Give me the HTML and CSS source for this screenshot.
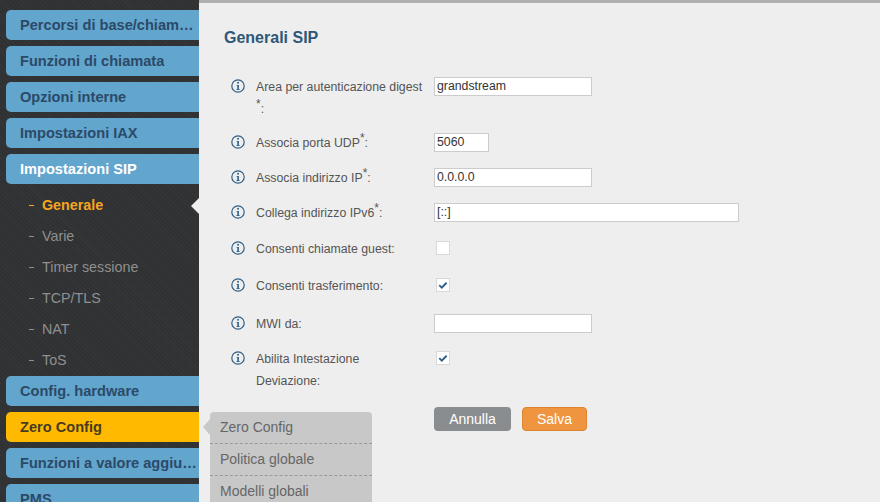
FILE: index.html
```html
<!DOCTYPE html>
<html lang="it">
<head>
    <meta charset="UTF-8">
    <meta name="viewport" content="width=device-width, initial-scale=1.0">
    <title>Generali SIP</title>
    <link rel="stylesheet" href="styles.css">
</head>
<body>
    <svg class="defs" width="0" height="0">
        <symbol id="info" viewBox="0 0 14 14">
            <circle cx="7" cy="7" r="6.2" fill="none" stroke="#2f5f86" stroke-width="1.2"/>
            <rect x="6.2" y="2.9" width="1.7" height="1.7" fill="#2f5f86"/>
            <path d="M5.6 5.9h2.3v4.3h.8v.9H5.4v-.9h.9V6.8h-.7z" fill="#2f5f86"/>
        </symbol>
    </svg>

    <nav class="sidebar">
        <a class="menu-item">Percorsi di base/chiamate in uscita</a>
        <a class="menu-item">Funzioni di chiamata</a>
        <a class="menu-item">Opzioni interne</a>
        <a class="menu-item">Impostazioni IAX</a>
        <a class="menu-item open">Impostazioni SIP</a>
        <ul class="submenu">
            <li class="current">Generale</li>
            <li>Varie</li>
            <li>Timer sessione</li>
            <li>TCP/TLS</li>
            <li>NAT</li>
            <li>ToS</li>
        </ul>
        <a class="menu-item">Config. hardware</a>
        <a class="menu-item hover">Zero Config</a>
        <a class="menu-item">Funzioni a valore aggiunto</a>
        <a class="menu-item">PMS</a>
    </nav>

    <main class="content">
        <h1 class="title">Generali SIP</h1>
        <form class="form">
            <svg class="info"><use href="#info"/></svg>
            <label class="label">Area per autenticazione digest <sup>*</sup>:</label>
            <div><input type="text" class="input" value="grandstream"></div>

            <svg class="info"><use href="#info"/></svg>
            <label class="label">Associa porta UDP<sup>*</sup>:</label>
            <div><input type="text" class="input small" value="5060"></div>

            <svg class="info"><use href="#info"/></svg>
            <label class="label">Associa indirizzo IP<sup>*</sup>:</label>
            <div><input type="text" class="input" value="0.0.0.0"></div>

            <svg class="info"><use href="#info"/></svg>
            <label class="label">Collega indirizzo IPv6<sup>*</sup>:</label>
            <div><input type="text" class="input large" value="[::]"></div>

            <svg class="info"><use href="#info"/></svg>
            <label class="label">Consenti chiamate guest:</label>
            <div><span class="check"></span></div>

            <svg class="info"><use href="#info"/></svg>
            <label class="label">Consenti trasferimento:</label>
            <div><span class="check"><svg viewBox="0 0 14 14"><path d="M2.6 7.2l3 2.8 5.6-5.6" fill="none" stroke="#2f5f86" stroke-width="2.2"/></svg></span></div>

            <svg class="info"><use href="#info"/></svg>
            <label class="label">MWI da:</label>
            <div><input type="text" class="input" value=""></div>

            <svg class="info"><use href="#info"/></svg>
            <label class="label">Abilita Intestazione Deviazione:</label>
            <div><span class="check"><svg viewBox="0 0 14 14"><path d="M2.6 7.2l3 2.8 5.6-5.6" fill="none" stroke="#2f5f86" stroke-width="2.2"/></svg></span></div>
        </form>
        <div class="actions">
            <button type="button" class="btn cancel">Annulla</button>
            <button type="button" class="btn save">Salva</button>
        </div>
    </main>

    <div class="popup">
        <a>Zero Config</a>
        <a>Politica globale</a>
        <a>Modelli globali</a>
    </div>
</body>
</html>
```

FILE: styles.css
```css
* {
    margin: 0;
    padding: 0;
    box-sizing: border-box;
    font-family: "Liberation Sans", Arial, sans-serif;
}
html, body {
    height: 100%;
    overflow: hidden;
}
body {
    display: flex;
    background-color: #eeeeee;
    color: #555;
    font-size: 12px;
}
.defs {
    position: absolute;
}
.sidebar {
    flex: 0 0 199px;
    height: 502px;
    padding: 10px 0 0 6px;
    display: flex;
    flex-direction: column;
    gap: 6px;
    background-color: #2f3133;
    background-image: repeating-linear-gradient(45deg, rgba(255, 255, 255, 0.025) 0 1px, transparent 1px 3px);
    overflow: hidden;
}
.menu-item {
    flex: 0 0 30px;
    display: block;
    padding: 0 0 0 14px;
    line-height: 30px;
    font-size: 14.6px;
    font-weight: bold;
    color: #2b4a68;
    background: #62a5cd;
    border-radius: 5px 0 0 5px;
    white-space: nowrap;
    overflow: hidden;
    text-overflow: ellipsis;
}
.menu-item.open {
    color: #fff;
}
.menu-item.hover {
    background: #ffba00;
    color: #4a3a20;
}
.submenu {
    list-style: none;
    margin: 0 0 -6px -6px;
    position: relative;
}
.submenu li {
    height: 31px;
    line-height: 31px;
    padding-left: 42px;
    font-size: 14.3px;
    color: #8f8f8f;
    position: relative;
}
.submenu li::before {
    content: "";
    position: absolute;
    left: 29px;
    top: 15px;
    width: 5px;
    height: 1px;
    background: #8f8f8f;
}
.submenu .current {
    color: #f5a623;
    font-weight: bold;
}
.submenu .current::before {
    background: #f5a623;
}
.submenu .current::after {
    content: "";
    position: absolute;
    right: 0;
    top: 8px;
    border-style: solid;
    border-width: 8px 8px 8px 0;
    border-color: transparent #eeeeee transparent transparent;
}
.content {
    flex: 1;
    height: 502px;
    padding: 26px 0 0 25px;
    border-top: 3px solid #b0b0b0;
}
.title {
    font-size: 16px;
    line-height: 18px;
    font-weight: bold;
    color: #2d5878;
    margin-bottom: 29px;
}
.form {
    display: grid;
    grid-template-columns: 32px 178px 1fr;
    grid-template-rows: 56px 35px 35px 36px 37px 38px 35px 59px;
}
.info {
    width: 14px;
    height: 14px;
    margin: 3px 0 0 6.5px;
}
.label {
    width: 170px;
    line-height: 22px;
    font-size: 12.3px;
    color: #555;
}
.label sup {
    font-size: 12px;
    line-height: 0;
}
.input {
    display: block;
    width: 158px;
    height: 19px;
    padding: 0 2px 2px;
    border: 1px solid #cccccc;
    background: #fff;
    font-size: 12.3px;
    color: #333;
    outline: none;
    margin-top: 1px;
}
.input.small {
    width: 55px;
}
.input.large {
    width: 305px;
}
.check {
    display: block;
    width: 14px;
    height: 14px;
    margin: 3px 0 0 2px;
    background: #fff;
    border: 1px solid #d8d8d8;
}
.check svg {
    display: block;
    width: 12px;
    height: 12px;
}
.actions {
    display: flex;
    gap: 11px;
    padding-left: 210px;
}
.btn {
    height: 24px;
    border: 1px solid transparent;
    border-radius: 4px;
    font-size: 14px;
    color: #fff;
}
.cancel {
    width: 77px;
    background: #8a8d8f;
}
.save {
    width: 65px;
    background: #f0953f;
    border-color: #dc8432;
}
.popup {
    position: absolute;
    left: 210px;
    top: 412px;
    width: 162px;
    background: #c8c8c8;
    border-radius: 4px 4px 0 0;
}
.popup::before {
    content: "";
    position: absolute;
    left: -7px;
    top: 7px;
    border-style: solid;
    border-width: 8px 7px 8px 0;
    border-color: transparent #c8c8c8 transparent transparent;
}
.popup a {
    display: block;
    height: 32px;
    padding-left: 10px;
    line-height: 30px;
    font-size: 14px;
    color: #666;
    border-bottom: 1px dashed #999;
}
```
